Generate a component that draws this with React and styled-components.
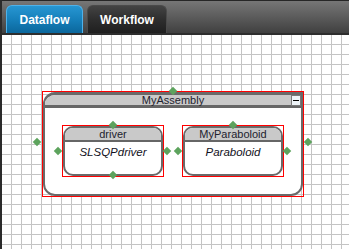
import React from 'react';
import styled, { createGlobalStyle } from 'styled-components';

const GlobalStyle = createGlobalStyle`
  html, body {
    margin: 0;
    padding: 0;
    background: #ffffff;
  }
  body {
    font-family: "Liberation Sans", Arial, sans-serif;
  }
`;

const Page = styled.div`
  width: 349px;
  height: 249px;
  display: flex;
  flex-direction: column;
  overflow: hidden;
  border-left: 2px solid #2b2b2b;
  box-sizing: border-box;
`;

const TabBar = styled.div`
  height: 35px;
  flex: none;
  display: flex;
  align-items: flex-end;
  gap: 4px;
  padding-left: 4px;
  box-sizing: border-box;
  border-top: 1px solid #262626;
  border-bottom: 2px solid #2e2e2e;
  background: linear-gradient(to bottom, #767676 0%, #5e5e5e 45%, #404040 100%);
`;

const Tab = styled.div`
  width: ${p => p.w}px;
  height: 28px;
  box-sizing: border-box;
  display: flex;
  align-items: center;
  justify-content: center;
  border-radius: 6px 6px 0 0;
  font-size: 12px;
  font-weight: 700;
  color: #ffffff;
  border: 1px solid ${p => (p.active ? '#4fb2ea' : '#4a4a4a')};
  border-bottom: none;
  background: ${p =>
    p.active
      ? 'linear-gradient(to bottom, #2796d2 0%, #1680bb 50%, #0b679c 100%)'
      : 'linear-gradient(to bottom, #434343 0%, #2e2e2e 50%, #1f1f1f 100%)'};
`;

const Canvas = styled.div`
  flex: 1;
  position: relative;
  background-color: #ffffff;
  background-image:
    linear-gradient(to right, #c4c4c4 1px, transparent 1px),
    linear-gradient(to bottom, #c4c4c4 1px, transparent 1px);
  background-size: 10px 10px;
  background-position: 9px 9px;
`;

const Selection = styled.div`
  position: ${p => (p.free ? 'absolute' : 'relative')};
  left: ${p => (p.free ? `${p.x}px` : 'auto')};
  top: ${p => (p.free ? `${p.y}px` : 'auto')};
  width: ${p => p.w}px;
  flex: none;
  border: 1px solid #ff0000;
  box-sizing: border-box;
`;

const Figure = styled.div`
  background: #ffffff;
  border: 2px solid #6a6a6a;
  border-top-width: ${p => p.top}px;
  border-radius: ${p => p.r}px ${p => p.tr}px ${p => p.br}px ${p => p.br}px;
  overflow: hidden;
`;

const Header = styled.div`
  position: relative;
  height: ${p => p.h}px;
  background: #c9c9c9;
  border-bottom: ${p => p.line}px solid #666666;
  display: flex;
  align-items: center;
  justify-content: center;
  font-size: 11px;
  color: #22222e;
  line-height: 1;
`;

const Collapse = styled.div`
  position: absolute;
  right: 0;
  top: 0;
  width: 8px;
  height: 9px;
  background: #eef4f8;
  border: 1px solid #7a7a7a;
  display: flex;
  align-items: center;
  justify-content: center;
  &::after {
    content: '';
    width: 6px;
    height: 1px;
    background: #000000;
  }
`;

const AssemblyBody = styled.div`
  display: flex;
  gap: 18px;
  padding: 17px 17px;
`;

const ComponentBody = styled.div`
  height: 32px;
  box-sizing: border-box;
  padding-top: 3px;
  text-align: center;
  font-size: 11.5px;
  line-height: 14px;
  font-style: italic;
  color: #111122;
`;

const Port = styled.span`
  position: absolute;
  width: 6px;
  height: 6px;
  background: #5da35d;
  transform: rotate(45deg);
  left: ${p => p.x}px;
  top: ${p => p.y}px;
`;

const components = [
  { name: 'driver', type: 'SLSQPdriver', bottom: true },
  { name: 'MyParaboloid', type: 'Paraboloid', bottom: false },
];

const ComponentNode = ({ name, type, bottom }) => (
  <Selection w={102}>
    <Figure top={2} r={10} tr={10} br={10}>
      <Header h={12} line={2}>{name}</Header>
      <ComponentBody>{type}</ComponentBody>
    </Figure>
    <Port x={47} y={-4} />
    <Port x={-8} y={22} />
    <Port x={101} y={22} />
    {bottom && <Port x={47} y={46} />}
  </Selection>
);

export default function App() {
  return (
    <>
      <GlobalStyle />
      <Page>
        <TabBar>
          <Tab active w={77}>Dataflow</Tab>
          <Tab w={80}>Workflow</Tab>
        </TabBar>
        <Canvas>
          <Selection free x={40} y={56} w={262}>
            <Figure top={3} r={12} tr={0} br={12}>
              <Header h={10} line={3}>
                MyAssembly
                <Collapse />
              </Header>
              <AssemblyBody>
                {components.map(c => (
                  <ComponentNode key={c.name} {...c} />
                ))}
              </AssemblyBody>
            </Figure>
            <Port x={127} y={-4} />
            <Port x={-9} y={47} />
            <Port x={262} y={47} />
          </Selection>
        </Canvas>
      </Page>
    </>
  );
}
